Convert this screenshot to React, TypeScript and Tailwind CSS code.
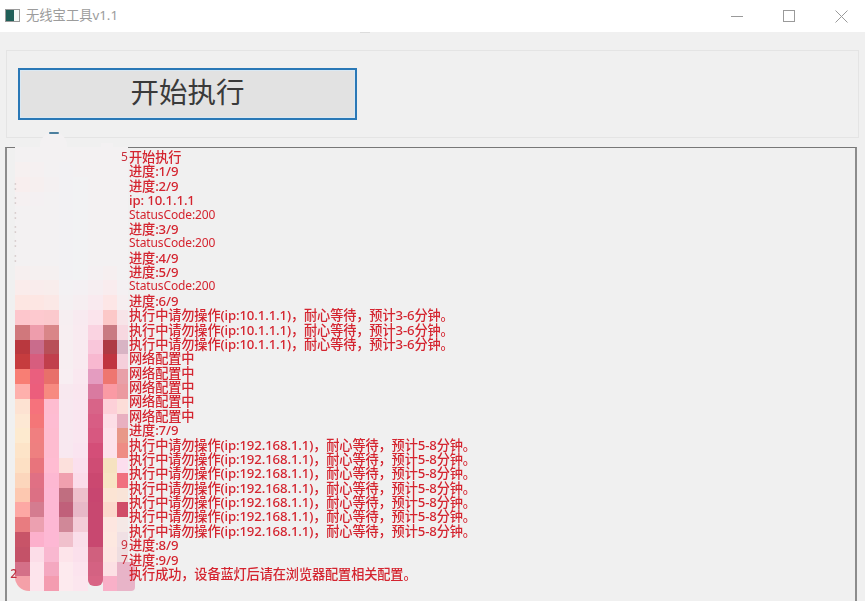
const logLines = [
  "开始执行",
  "进度:1/9",
  "进度:2/9",
  "ip:  10.1.1.1",
  "StatusCode:200",
  "进度:3/9",
  "StatusCode:200",
  "进度:4/9",
  "进度:5/9",
  "StatusCode:200",
  "进度:6/9",
  "执行中请勿操作(ip:10.1.1.1)，耐心等待，预计3-6分钟。",
  "执行中请勿操作(ip:10.1.1.1)，耐心等待，预计3-6分钟。",
  "执行中请勿操作(ip:10.1.1.1)，耐心等待，预计3-6分钟。",
  "网络配置中",
  "网络配置中",
  "网络配置中",
  "网络配置中",
  "网络配置中",
  "进度:7/9",
  "执行中请勿操作(ip:192.168.1.1)，耐心等待，预计5-8分钟。",
  "执行中请勿操作(ip:192.168.1.1)，耐心等待，预计5-8分钟。",
  "执行中请勿操作(ip:192.168.1.1)，耐心等待，预计5-8分钟。",
  "执行中请勿操作(ip:192.168.1.1)，耐心等待，预计5-8分钟。",
  "执行中请勿操作(ip:192.168.1.1)，耐心等待，预计5-8分钟。",
  "执行中请勿操作(ip:192.168.1.1)，耐心等待，预计5-8分钟。",
  "执行中请勿操作(ip:192.168.1.1)，耐心等待，预计5-8分钟。",
  "进度:8/9",
  "进度:9/9",
  "执行成功，设备蓝灯后请在浏览器配置相关配置。",
];

// bits of the timestamps that stick out either side of the mosaic
const rightScraps: Record<number, string> = { 0: "5", 27: "9", 28: "7" };

// the pixelated patch hiding the timestamps, one row = 14.8px
const mosaic = [
  ["#f3f1f2", "#f3f1f2", "#f3f1f2", "#f3f1f2", "#f3f1f2", "#f3f1f2", "#f3f1f2", "#f3f1f2"],
  ["#f6f0f0", "#f5f0f1", "#f3f1f2", "#f2f1f3", "#f3f1f2", "#f3f1f2", "#f3f1f2", "#f3f1f2"],
  ["#f8eeee", "#f6efef", "#f4f0f1", "#f2f1f3", "#f2f2f3", "#f3f1f2", "#f3f1f2", "#f3f1f2"],
  ["#f5f0f1", "#f4f0f2", "#f3f1f2", "#f2f1f3", "#f2f2f3", "#f3f1f2", "#f3f1f2", "#f3f1f2"],
  ["#f3f1f2", "#f3f1f2", "#f3f1f2", "#f2f1f3", "#f2f2f3", "#f3f1f2", "#f3f1f2", "#f3f1f2"],
  ["#f3f1f2", "#f3f1f2", "#f3f1f2", "#f2f1f3", "#f2f2f3", "#f3f1f2", "#f3f1f2", "#f3f1f2"],
  ["#f3f1f2", "#f3f1f2", "#f3f1f2", "#f2f1f3", "#f2f2f3", "#f3f1f2", "#f3f1f2", "#f3f1f2"],
  ["#f3f1f2", "#f3f1f2", "#f3f1f2", "#f2f1f3", "#f2f2f3", "#f3f1f2", "#f3f1f2", "#f3f1f2"],
  ["#f6efef", "#f5f0f0", "#f5f0f0", "#f2f1f3", "#f2f2f3", "#f4f0f2", "#f6eff0", "#f3f1f2"],
  ["#faeceb", "#f9ecec", "#f8edec", "#f3f1f3", "#f4f0f3", "#f6eef1", "#f9ecee", "#f4f0f2"],
  ["#fde6e2", "#fde6e3", "#fbe8e6", "#f4f0f2", "#f6eef1", "#f9eaef", "#fde6e6", "#f6eef0"],
  ["#fdc6cc", "#fdc9cf", "#fbc9cd", "#f6eef1", "#f8eaf0", "#fbe4ec", "#fcc8c8", "#f7e4e8"],
  ["#d0787c", "#ee9dac", "#d98688", "#f7eef1", "#f9eaf0", "#fad3e1", "#c97a82", "#f7d8e0"],
  ["#b9383e", "#c96c8c", "#b85058", "#f7eef1", "#f9eaf0", "#f9c6da", "#ae3a44", "#d8b4c4"],
  ["#c63c3e", "#d75d7e", "#c13f4c", "#f7eef1", "#f9eaf0", "#f8b8d0", "#c03440", "#f5cfdb"],
  ["#f87e74", "#ea5f7e", "#e8706a", "#f8eef2", "#fae8f0", "#e49cc0", "#ee7670", "#e8a0a8"],
  ["#feb0ac", "#ec5e7c", "#f78a80", "#f8e8ef", "#fae6ef", "#d97aa0", "#fa9aa4", "#eb9aa0"],
  ["#fde2d2", "#f6727c", "#febcd0", "#f8e8f0", "#fae6f0", "#d86488", "#fdd0d8", "#fcddd8"],
  ["#fde8d4", "#f47678", "#febcd2", "#f8e8f0", "#fae6f0", "#d85d84", "#fddee6", "#e8b0c0"],
  ["#fdeacf", "#f07f80", "#febcd0", "#f8e8f0", "#fae6f0", "#d75880", "#fde2ea", "#e89888"],
  ["#fde4c8", "#ee8080", "#febcd0", "#f8e8f0", "#fae4f0", "#d44e78", "#fde2ea", "#ee8c84"],
  ["#fde0c4", "#e8747c", "#ffbcd2", "#fce0dc", "#fbe0ee", "#cf4c74", "#f6e2c0", "#fcdeee"],
  ["#fcd6bc", "#e07084", "#fdb8d2", "#f0a0ae", "#fbdcea", "#cb4870", "#f8e4c4", "#f07080"],
  ["#fdc8b0", "#dc7084", "#fdb8d4", "#c06e80", "#eec0cc", "#c84670", "#fce4d4", "#f9e4d8"],
  ["#fda8a4", "#d47c90", "#fdb8d4", "#c0607a", "#e8b8c8", "#c84870", "#fcd8cc", "#d04c68"],
  ["#e87c80", "#eca0b0", "#fdb8d4", "#d08898", "#f4ccd8", "#c84870", "#fde6e0", "#f5e8e6"],
  ["#c85468", "#fcb0cc", "#fdb8d4", "#f0c0cc", "#fadeea", "#c84870", "#fde8e0", "#f0e0e4"],
  ["#c45268", "#fcdde8", "#f9b8d0", "#fde4ea", "#fbe0ec", "#d0607e", "#fde6e2", "#eedde0", "#00000000"],
  ["#d47088", "#fde4ec", "#f4a8c0", "#fdeaee", "#fce4ee", "#d46282", "#fce0e4", "#e8b4c8", "#e8b4c8"],
  ["#f4a0a8", "#fde4ec", "#f49cb0", "#fdeaee", "#fce6ee", "#d86484", "#f9b0c8", "#e8b4c8", "#e8b4c8"],
];

function WindowControls() {
  return (
    <div className="ml-auto flex items-center text-[#9a9a9a]">
      <svg width="12" height="12" viewBox="0 0 12 12" className="mr-[40px]">
        <path d="M0 6.5H12" stroke="currentColor" />
      </svg>
      <svg width="12" height="12" viewBox="0 0 12 12" className="mr-[40px]">
        <rect x="0.5" y="0.5" width="11" height="11" fill="none" stroke="currentColor" />
      </svg>
      <svg width="13" height="13" viewBox="0 0 13 13" className="mr-[17px]">
        <path d="M0.5 0.5L12.5 12.5M12.5 0.5L0.5 12.5" stroke="currentColor" />
      </svg>
    </div>
  );
}

function LogLine({ text, index }: { text: string; index: number }) {
  const isLast = index === logLines.length - 1;
  const hasDots = index >= 2 && index <= 7;
  return (
    <div className="flex">
      <span className={`w-[10px] flex-shrink-0 text-right text-[12px] ${isLast ? "text-[#c03040]" : "text-[#d6cccc]"}`}>
        {isLast ? "2" : hasDots ? ":" : ""}
      </span>
      <span className="ml-[104px] w-[8px] flex-shrink-0 text-[12px] font-normal text-[#c9303c]">
        {rightScraps[index] ?? ""}
      </span>
      <span className={text.startsWith("StatusCode") ? "text-[12px] font-normal" : ""}>{text}</span>
    </div>
  );
}

export default function App() {
  return (
    <div
      className="relative flex h-[601px] w-[865px] flex-col overflow-hidden bg-[#f0f0f0]"
      style={{ fontFamily: '"Noto Sans", "Noto Sans CJK SC", sans-serif' }}
    >
      {/* Title bar */}
      <div className="flex h-8 flex-shrink-0 items-center bg-white pl-[5px]">
        <div className="mb-[1px] flex h-[13px] w-[15px] border border-[#9a9a9a] bg-[#f4f8f6]">
          <div className="w-[8px] bg-[#1f5f58]" />
        </div>
        <span className="ml-[6px] text-[13.3px] leading-none text-[#9c9c9c]">无线宝工具v1.1</span>
        <WindowControls />
      </div>

      <div className="flex min-h-0 flex-1 flex-col px-[6px]">
        <div className="mb-[17px] ml-[354px] h-[1px] w-[10px] bg-[#dcdcdc]" />

        {/* Button group */}
        <div className="h-[88px] flex-shrink-0 border border-[#e4e4e4] pl-[11px] pt-[17px]">
          <button className="flex h-[52px] w-[339px] items-center justify-center border-2 border-[#2a78b6] bg-[#e2e2e2] pb-[3px] text-[28.5px] leading-none text-[#3a3a3a] shadow-[inset_0_0_0_1px_#d9e8f3]">
            开始执行
          </button>
        </div>

        {/* Log output */}
        <div className="-ml-[1px] mt-[9px] min-h-0 w-[852px] flex-1 border-x-2 border-t-[1.5px] border-x-[#8c8c8c] border-t-[#777777] pt-[2px]">
          <div className="relative z-10 text-[13.2px] leading-[14.38px] font-medium tracking-[-0.12px] whitespace-nowrap text-[#d4242f] blur-[0.3px]">
            {logLines.map((line, i) => (
              <LogLine key={i} text={line} index={i} />
            ))}
          </div>
        </div>
      </div>

      {/* Mosaic over the timestamps */}
      <div className="absolute left-[15px] top-[147.2px] grid grid-cols-[repeat(7,14.6px)_11px_7px] auto-rows-[14.8px]">
        {mosaic.map((row, r) =>
          row.map((color, c) => (
            <div
              key={`${r}-${c}`}
              className={
                r === mosaic.length - 1 && c === 0
                  ? "rounded-bl-[14px]"
                  : r === mosaic.length - 1 && c === 5
                    ? "mb-[5px] rounded-b-[6px]"
                    : r === mosaic.length - 1 && c === 8
                      ? "rounded-br-[4px]"
                      : ""
              }
              style={{ backgroundColor: color, gridColumnStart: c + 1 }}
            />
          )),
        )}
      </div>
      <div className="absolute left-[40px] top-[132px] flex h-[17px] w-[27px] justify-center rounded-t-full bg-[#f3f1f2]">
        <div className="h-[2px] w-[10px] rounded-full bg-[#4b7f9e]" />
      </div>
      <div className="absolute left-[101px] top-[143px] h-[6px] w-[12px] bg-[#f3f1f2]" />
    </div>
  );
}
